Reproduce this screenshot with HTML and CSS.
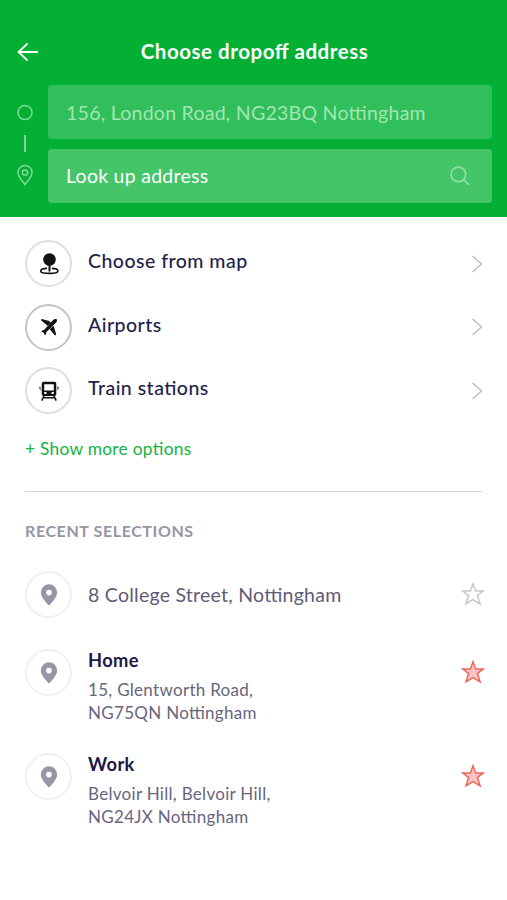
FILE: index.html
```html
<!DOCTYPE html>
<html lang="en">
<head>
<meta charset="utf-8">
<title>Choose dropoff address</title>
<link rel="stylesheet" href="styles.css">
</head>
<body>
<svg class="defs" aria-hidden="true">
  <symbol id="chevron" viewBox="0 0 12 20"><path d="M1.500 2 10.500 10 1.500 18" fill="none" stroke="currentColor" stroke-width="1.500"/></symbol>
  <symbol id="marker" viewBox="0 0 18 22"><path fill="currentColor" fill-rule="evenodd" d="M9 .3a8.200 8.200 0 0 0-8.200 8.200C.8 14 9 21.500 9 21.500S17.200 14 17.200 8.500A8.200 8.200 0 0 0 9 .3Zm0 5.500a2.800 2.800 0 1 1 0 5.600 2.800 2.800 0 0 1 0-5.600Z"/></symbol>
  <symbol id="star" viewBox="0 0 24 24"><path d="m12 1.700 2.600 7.200h7.800l-6 4.700 2.700 8.300L12 17.600l-7.100 4.300 2.700-8.300-6-4.700h7.800Z" stroke="currentColor" stroke-width="1.500"/></symbol>
</svg>
<header class="header">
  <div class="titlebar">
    <svg class="back" viewBox="0 0 22 20"><path d="M10.500 1.500 1.500 10l9 8.500M1.500 10H21" fill="none" stroke="currentColor" stroke-width="1.800"/></svg>
    <h1 class="title">Choose dropoff address</h1>
  </div>
  <div class="route">
    <div class="rail">
      <svg viewBox="0 0 16 84"><g fill="none" stroke="currentColor" stroke-width="1.500"><circle cx="8" cy="9.500" r="7"/><path d="M8 32v17" stroke-width="2"/><path d="M8 81.500C5.500 77.500 1 74.500 1 69.500a7 7 0 0 1 14 0c0 5-4.500 8-7 12Z"/><circle cx="8" cy="69.500" r="2.600"/></g></svg>
    </div>
    <div class="fields">
      <div class="field field-origin"><span>156, London Road, NG23BQ Nottingham</span></div>
      <div class="field field-search"><span>Look up address</span>
        <svg class="search" viewBox="0 0 20 20"><g fill="none" stroke="currentColor" stroke-width="1.700"><circle cx="8.400" cy="8.400" r="7.300"/><path d="m13.600 13.600 5.600 5.300"/></g></svg>
      </div>
    </div>
  </div>
</header>
<main class="content">
  <div class="options">
    <div class="option">
      <span class="disc"><svg class="glyph" viewBox="0 0 22 22"><circle cx="11.500" cy="6.500" r="6.300"/><path d="M10.500 12h2v6.500h-2z"/><path d="M9 15.400c-3.500.2-6.300 1-6.300 2.500 0 1.600 4 2.500 8.600 2.500s8.600-.9 8.600-2.500c0-1.500-2.500-2.300-6-2.500" fill="none" stroke="currentColor" stroke-width="1.600"/></svg></span>
      <span class="label">Choose from map</span>
      <svg class="chevron"><use href="#chevron"/></svg>
    </div>
    <div class="option">
      <span class="disc disc-dark"><svg class="glyph" viewBox="0 0 22 22"><path d="M14.600 4.500c1.500-1.400 3.600-1.800 4.200-1.100s.1 2.400-1.400 3.900L8.200 16.200l-.3 2.300-1 .8-1.100-2.500-2.500-1.200.9-1 1.900-.5Z"/><path d="m2.800 4 1-1.100 7.400 2 1.600 1.800-3.300 3ZM15.600 9.800l2.600 8.700-1.200 1.100-5.300-6.300Z"/></svg></span>
      <span class="label">Airports</span>
      <svg class="chevron"><use href="#chevron"/></svg>
    </div>
    <div class="option">
      <span class="disc"><svg class="glyph" viewBox="0 0 22 22"><path fill-rule="evenodd" d="M5.700 1.800h10.600q2 0 2 2v10.400q0 1.800-2 1.800H5.700q-2 0-2-1.800V3.800q0-2 2-2Zm.5 2.400v6.300h9.600V4.200Zm0 7.800v2h2.300v-2Zm7.300 0v2h2.300v-2Z"/><path d="M.8 6.800h2v3.400H1.700V8.600H.8zM21.200 6.800h-2v3.400h1.100V8.600h.9z" opacity=".6"/><path d="m6 16-2.200 4.700M16 16l2.200 4.700M6 17.800h10" stroke="currentColor" stroke-width="1.600"/></svg></span>
      <span class="label">Train stations</span>
      <svg class="chevron"><use href="#chevron"/></svg>
    </div>
  </div>
  <a class="more">+ Show more options</a>
  <section class="recent">
    <h2 class="heading">RECENT SELECTIONS</h2>
    <div class="place place-single">
      <span class="disc disc-light"><svg class="marker"><use href="#marker"/></svg></span>
      <p class="street">8 College Street, Nottingham</p>
      <svg class="star"><use href="#star"/></svg>
    </div>
    <div class="place">
      <span class="disc disc-light"><svg class="marker"><use href="#marker"/></svg></span>
      <div class="details"><h3 class="name">Home</h3><p class="address">15, Glentworth Road,<br>NG75QN Nottingham</p></div>
      <svg class="star star-on"><use href="#star"/></svg>
    </div>
    <div class="place">
      <span class="disc disc-light"><svg class="marker"><use href="#marker"/></svg></span>
      <div class="details"><h3 class="name">Work</h3><p class="address">Belvoir Hill, Belvoir Hill,<br>NG24JX Nottingham</p></div>
      <svg class="star star-on"><use href="#star"/></svg>
    </div>
  </section>
</main>
</body>
</html>
```
FILE: styles.css
```css
* { box-sizing: border-box; }
body, h1, h2, h3, p { margin: 0; }
body {
  min-height: 900px;
  background: #fff;
  color: #241f4c;
  font-family: Lato, Carlito, sans-serif;
  font-feature-settings: "liga" 1;
}
svg { display: block; flex: none; }
.defs { position: absolute; width: 0; height: 0; }

.header { height: 217px; padding: 34px 15px 0 17px; background: #03b034; color: #fff; }
.titlebar { display: grid; grid-template-columns: 22px 1fr 22px; align-items: center; height: 35px; }
.back { width: 22px; height: 20px; }
.title { text-align: center; font-size: 20.500px; line-height: 35px; font-weight: 700; letter-spacing: .55px; white-space: nowrap; }
.route { display: flex; margin-top: 16px; }
.rail { width: 31px; padding-top: 18px; color: #80d899; }
.rail svg { width: 16px; height: 84px; }
.fields { flex: 1; display: grid; gap: 10px; }
.field { display: flex; align-items: center; justify-content: space-between; height: 54px; padding: 0 22px 0 18px; border-radius: 4px; font-size: 19.500px; letter-spacing: .26px; }
.field-search span { margin-top: -2px; }
.field-origin { background: #30bf5a; color: #a3e5b3; }
.field-search { background: #44c568; }
.search { width: 20px; height: 20px; color: #94dfa8; }

.content { padding: 23px 25px 0; }
.options { display: grid; gap: 16.500px; }
.option { display: flex; align-items: center; height: 47px; }
.disc { display: grid; place-items: center; flex: none; width: 47px; height: 47px; border: 2px solid #dedede; border-radius: 50%; }
.disc-dark { border-color: #c4c4c4; }
.disc-light { border-color: #f0f0f1; }
.glyph { width: 22px; height: 22px; color: #111; fill: #111; }
.label { flex: 1; margin: -6px 0 0 16px; font-size: 19.500px; font-weight: 500; letter-spacing: .48px; }
.chevron { width: 12px; height: 20px; margin-right: -1px; color: #b9c1c1; }
.more { display: block; margin-top: 25px; color: #12b440; font-size: 17.300px; line-height: 20px; letter-spacing: .3px; }
.recent { margin-top: 32px; border-top: 1px solid #d8d8dc; }
.heading { margin-top: 29px; color: #9696a5; font-size: 16px; line-height: 20px; font-weight: 700; letter-spacing: .6px; }
.place { display: flex; align-items: flex-start; height: 104px; }
.place-single { height: 78px; margin-top: 30px; }
.marker { width: 18px; height: 22px; color: #9795a8; }
.street { flex: 1; margin-left: 16px; color: #5f5b78; font-size: 19.500px; line-height: 48px; letter-spacing: .25px; }
.details { flex: 1; margin-left: 16px; }
.name { color: #1d1746; font-size: 18.300px; line-height: 22px; letter-spacing: .4px; }
.address { margin-top: 7px; color: #68657d; font-size: 17px; line-height: 23px; letter-spacing: .3px; }
.star { width: 24px; height: 24px; margin: 11px -3px 0 0; color: #c6c7ca; fill: none; }
.star-on { color: #e7695b; fill: #ffc3c3; }
```
